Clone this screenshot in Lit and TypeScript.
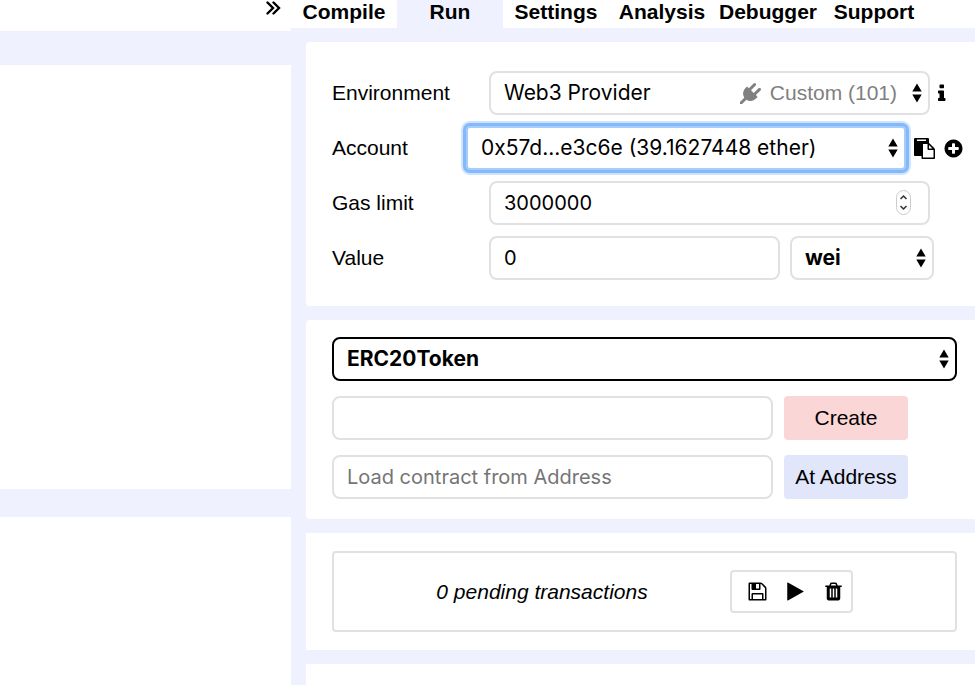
import { LitElement, html, css, svg } from "lit";
import { customElement, property, state } from "lit/decorators.js";
import { classMap } from "lit/directives/class-map.js";

const ICONS: Record<string, { w: number; d: string }> = {
  info: {
    w: 640,
    d: "M640 1344v128q0 26-19 45t-45 19H64q-26 0-45-19t-19-45v-128q0-26 19-45t45-19h64V896H64q-26 0-45-19T0 832V704q0-26 19-45t45-19h384q26 0 45 19t19 45v576h64q26 0 45 19t19 45zM512 192v192q0 26-19 45t-45 19H192q-26 0-45-19t-19-45V192q0-26 19-45t45-19h256q26 0 45 19t19 45z",
  },
  plus: {
    w: 1792,
    d: "M1344 960V832q0-26-19-45t-45-19h-256V512q0-26-19-45t-45-19H832q-26 0-45 19t-19 45v256H512q-26 0-45 19t-19 45v128q0 26 19 45t45 19h256v256q0 26 19 45t45 19h128q26 0 45-19t19-45v-256h256q26 0 45-19t19-45zm320-64q0 209-103 385.500T1281.500 1561 896 1664t-385.500-103T231 1281.500 128 896t103-385.500T510.500 231 896 128t385.500 103T1561 510.500 1664 896z",
  },
  paste: {
    w: 1792,
    d: "M768 1664h896v-640h-416q-40 0-68-28t-28-68V512H768v1152zm256-1440v-64q0-13-9.500-22.500T992 128H288q-13 0-22.500 9.500T256 160v64q0 13 9.500 22.500T288 256h704q13 0 22.500-9.500T1024 224zm256 672h299l-299-299v299zm512 128v672q0 40-28 68t-68 28H736q-40 0-68-28t-28-68v-160H96q-40 0-68-28t-28-68V96q0-40 28-68T96 0h1088q40 0 68 28t28 68v328q21 13 36 28l408 408q28 28 48 76t20 88z",
  },
  plug: {
    w: 1792,
    d: "M1755 453q37 38 37 90.500t-37 90.500l-401 400 150 150-160 160q-163 163-389.500 186.500t-411.500-100.500l-362 362h-181v-181l362-362q-124-185-100.500-411.500t186.500-389.500l160-160 150 150 400-401q38-37 91-37t90 37 37 90.500-37 90.500l-400 401 234 234 401-400q38-37 91-37t90 37z",
  },
  save: {
    w: 1792,
    d: "M512 1536h768v-384H512v384zm896 0h128V640q0-14-10-38.500t-20-34.500l-281-281q-10-10-34-20t-39-10v416q0 40-28 68t-68 28H480q-40 0-68-28t-28-68V256H256v1280h128v-416q0-40 28-68t68-28h832q40 0 68 28t28 68v416zm-384-928V288q0-13-9.500-22.500T992 256H800q-13 0-22.500 9.500T768 288v320q0 13 9.500 22.500T800 640h192q13 0 22.500-9.500t9.500-22.500zm640 32v928q0 40-28 68t-68 28H224q-40 0-68-28t-28-68V224q0-40 28-68t68-28h928q40 0 88 20t76 48l280 280q28 28 48 76t20 88z",
  },
  play: {
    w: 1792,
    d: "M1576 927L248 1665q-23 13-39.500 3t-16.500-36V160q0-26 16.500-36t39.500 3l1328 738q23 13 23 31t-23 31z",
  },
  trash: {
    w: 1792,
    d: "M704 1376V672q0-14-9-23t-23-9h-64q-14 0-23 9t-9 23v704q0 14 9 23t23 9h64q14 0 23-9t9-23zm256 0V672q0-14-9-23t-23-9h-64q-14 0-23 9t-9 23v704q0 14 9 23t23 9h64q14 0 23-9t9-23zm256 0V672q0-14-9-23t-23-9h-64q-14 0-23 9t-9 23v704q0 14 9 23t23 9h64q14 0 23-9t9-23zM672 384h448l-48-117q-7-9-17-11H738q-10 2-17 11zm928 32v64q0 14-9 23t-23 9h-96v948q0 83-47 143.500t-113 60.500H480q-66 0-113-58.500T320 1464V512h-96q-14 0-23-9t-9-23v-64q0-14 9-23t23-9h309l70-167q15-37 54-63t79-26h320q40 0 79 26t54 63l70 167h309q14 0 23 9t9 23z",
  },
};

@customElement("fa-icon")
export class FaIcon extends LitElement {
  @property() name = "info";

  static styles = css`
    :host {
      display: inline-flex;
      height: 21px;
    }
    svg {
      height: 100%;
      width: auto;
      fill: currentColor;
    }
  `;

  render() {
    const icon = ICONS[this.name];
    return html`<svg viewBox="0 0 ${icon.w} 1792" aria-hidden="true">
      ${svg`<path d=${icon.d}></path>`}
    </svg>`;
  }
}

const TABS = ["Compile", "Run", "Settings", "Analysis", "Debugger", "Support"];

@customElement("app-root")
export class AppRoot extends LitElement {
  @state() private active = "Run";

  static styles = css`
    :host {
      display: block;
      --panel: #eff1ff;
      --line: #e1e1e1;
      font: 21px/24px "Liberation Sans", Arial, sans-serif;
      color: #000;
    }
    * {
      box-sizing: border-box;
    }
    .page {
      display: grid;
      grid-template-columns: minmax(0, 291fr) minmax(0, 684fr);
      min-height: 100vh;
      background: var(--panel);
      overflow: hidden;
    }
    .editor {
      display: flex;
      flex-direction: column;
    }
    .editor-bar {
      display: flex;
      justify-content: flex-end;
      height: 31px;
      padding: 1px 10px 0 0;
      background: #fff;
    }
    .code {
      height: 424px;
      margin: 34px 0 28px;
      background: #fff;
    }
    .terminal {
      flex: 1;
      background: #fff;
    }
    button {
      border: 0;
      padding: 0;
      background: none;
      font: inherit;
      color: inherit;
      cursor: pointer;
    }
    .icon-button {
      display: inline-flex;
    }
    .collapse {
      height: 14px;
    }
    .collapse svg {
      width: 15px;
      height: 14px;
    }
    .side {
      display: flex;
      flex-direction: column;
    }
    .tabs {
      display: flex;
      height: 28px;
      background: #fff;
    }
    .tab {
      flex: 0 1 106px;
      min-width: 0;
      padding-bottom: 4px;
      font-weight: bold;
    }
    .tab.active {
      background: var(--panel);
    }
    .cards {
      flex: 1;
      display: flex;
      flex-direction: column;
      gap: 14px;
      padding: 14px 0 0 15px;
    }
    .card {
      background: #fff;
      border-radius: 4px 0 0 4px;
      padding: 17px 18px 20px 26px;
    }
    .settings {
      display: grid;
      gap: 11px;
      padding: 29px 8px 26px 26px;
    }
    .contract {
      display: grid;
      gap: 15px;
    }
    .queue-card {
      border-radius: 0;
      padding-top: 18px;
      padding-bottom: 18px;
    }
    .rest {
      flex: 1;
      border-radius: 0;
      padding: 0;
    }
    .row {
      display: flex;
      align-items: center;
    }
    .label {
      flex: 0 1 157px;
    }
    .label.short {
      flex-basis: 134px;
    }
    .field {
      position: relative;
      flex: 0 1 441px;
      min-width: 0;
    }
    .field.account {
      flex-basis: 440px;
    }
    .field.value {
      flex-basis: 291px;
      margin-right: 10px;
    }
    .field.unit {
      flex-basis: 144px;
    }
    .control {
      display: block;
      width: 100%;
      height: 44px;
      margin: 0;
      padding: 0 13px;
      border: 2px solid var(--line);
      border-radius: 8px;
      background: #fff;
      color: #000;
      font: 20px/24px Inter, "Liberation Sans", sans-serif;
      appearance: none;
      outline: none;
    }
    select.control {
      font-size: 21px;
    }
    .control[type="number"] {
      appearance: textfield;
    }
    .control::-webkit-inner-spin-button {
      appearance: none;
      margin: 0;
    }
    .control::placeholder {
      color: #757575;
      opacity: 1;
    }
    .focus {
      border-color: #a5cdfc;
      border-radius: 4px;
      box-shadow:
        0 0 0 3px #83b9fb,
        0 0 0 5px #cfe3fd;
    }
    select.bold {
      font-weight: 700;
    }
    .dark {
      border-color: #000;
    }
    .arrows {
      position: absolute;
      right: 8px;
      top: 12px;
      width: 10px;
      height: 20px;
      pointer-events: none;
    }
    .network {
      position: absolute;
      right: 33px;
      top: 10px;
      display: flex;
      gap: 9px;
      align-items: center;
      color: #808080;
      pointer-events: none;
    }
    .stepper {
      position: absolute;
      right: 19px;
      top: 9px;
      width: 15px;
      height: 25px;
      pointer-events: none;
    }
    .after {
      margin-left: 8px;
    }
    .action {
      flex: 0 0 124px;
      height: 44px;
      margin-left: 11px;
      border-radius: 4px;
    }
    .create {
      background: #fad6d7;
    }
    .at {
      background: #e1e6fb;
    }
    .queue {
      display: flex;
      align-items: center;
      justify-content: center;
      gap: 82px;
      height: 81px;
      border: 2px solid var(--line);
      border-radius: 4px;
    }
    .pending {
      font-style: italic;
    }
    .tools {
      display: flex;
      align-items: center;
      gap: 17px;
      height: 43px;
      padding: 0 7px 0 15px;
      border: 2px solid var(--line);
      border-radius: 4px;
    }
  `;

  private arrows() {
    return html`<svg class="arrows" viewBox="0 0 10 20" aria-hidden="true">
      <path d="M5 0.500L9.700 8.500H0.300zM5 19.500L9.700 11.500H0.300z"></path>
    </svg>`;
  }

  private iconButton(name: string, label: string, extra = "") {
    return html`<button class="icon-button ${extra}" aria-label=${label}>
      <fa-icon name=${name}></fa-icon>
    </button>`;
  }

  render() {
    return html`
      <div class="page">
        <section class="editor">
          <div class="editor-bar">
            <button class="icon-button collapse" aria-label="Collapse panel">
              <svg viewBox="0 0 15 14" aria-hidden="true">
                <path
                  d="M1.500 1.500L7 7l-5.500 5.500M7.500 1.500L13 7l-5.500 5.500"
                  fill="none"
                  stroke="#000"
                  stroke-width="2.400"
                  stroke-linecap="round"
                ></path>
              </svg>
            </button>
          </div>
          <div class="code"></div>
          <div class="terminal"></div>
        </section>
        <main class="side">
          <nav class="tabs">
            ${TABS.map(
              (tab) => html`<button
                class=${classMap({ tab: true, active: tab === this.active })}
                @click=${() => (this.active = tab)}
              >
                ${tab}
              </button>`,
            )}
          </nav>
          <div class="cards">
            <section class="card settings">
              <div class="row">
                <label class="label" for="env">Environment</label>
                <div class="field">
                  <select class="control" id="env">
                    <option>Web3 Provider</option>
                  </select>
                  <span class="network">
                    <fa-icon name="plug"></fa-icon>
                    <span>Custom (101)</span>
                  </span>
                  ${this.arrows()}
                </div>
                ${this.iconButton("info", "Environment help", "after")}
              </div>
              <div class="row">
                <label class="label short" for="account">Account</label>
                <div class="field account">
                  <select class="control focus" id="account">
                    <option>0x57d...e3c6e (39.1627448 ether)</option>
                  </select>
                  ${this.arrows()}
                </div>
                ${this.iconButton("paste", "Copy account", "after")}
                ${this.iconButton("plus", "Create account", "after")}
              </div>
              <div class="row">
                <label class="label" for="gas">Gas limit</label>
                <div class="field">
                  <input class="control" id="gas" type="number" value="3000000" />
                  <svg class="stepper" viewBox="0 0 15 25" aria-hidden="true">
                    <rect x="0.500" y="0.500" width="14" height="24" rx="7" fill="#fff" stroke="#ccc"></rect>
                    <path d="M4.500 9l3-3 3 3M4.500 16l3 3 3-3" fill="none" stroke="#333" stroke-width="1.500"></path>
                  </svg>
                </div>
              </div>
              <div class="row">
                <label class="label" for="value">Value</label>
                <div class="field value">
                  <input class="control" id="value" type="text" value="0" />
                </div>
                <div class="field unit">
                  <select class="control bold" aria-label="Unit">
                    <option>wei</option>
                  </select>
                  ${this.arrows()}
                </div>
              </div>
            </section>
            <section class="card contract">
              <div class="field">
                <select class="control bold dark" aria-label="Contract">
                  <option>ERC20Token</option>
                </select>
                ${this.arrows()}
              </div>
              <div class="row">
                <div class="field">
                  <input class="control" type="text" aria-label="Constructor arguments" />
                </div>
                <button class="action create">Create</button>
              </div>
              <div class="row">
                <div class="field">
                  <input
                    class="control"
                    type="text"
                    aria-label="Contract address"
                    placeholder="Load contract from Address"
                  />
                </div>
                <button class="action at">At Address</button>
              </div>
            </section>
            <section class="card queue-card">
              <div class="queue">
                <span class="pending">0 pending transactions</span>
                <div class="tools">
                  ${this.iconButton("save", "Save transactions")}
                  ${this.iconButton("play", "Run transactions")}
                  ${this.iconButton("trash", "Clear transactions")}
                </div>
              </div>
            </section>
            <section class="card rest"></section>
          </div>
        </main>
      </div>
    `;
  }
}
